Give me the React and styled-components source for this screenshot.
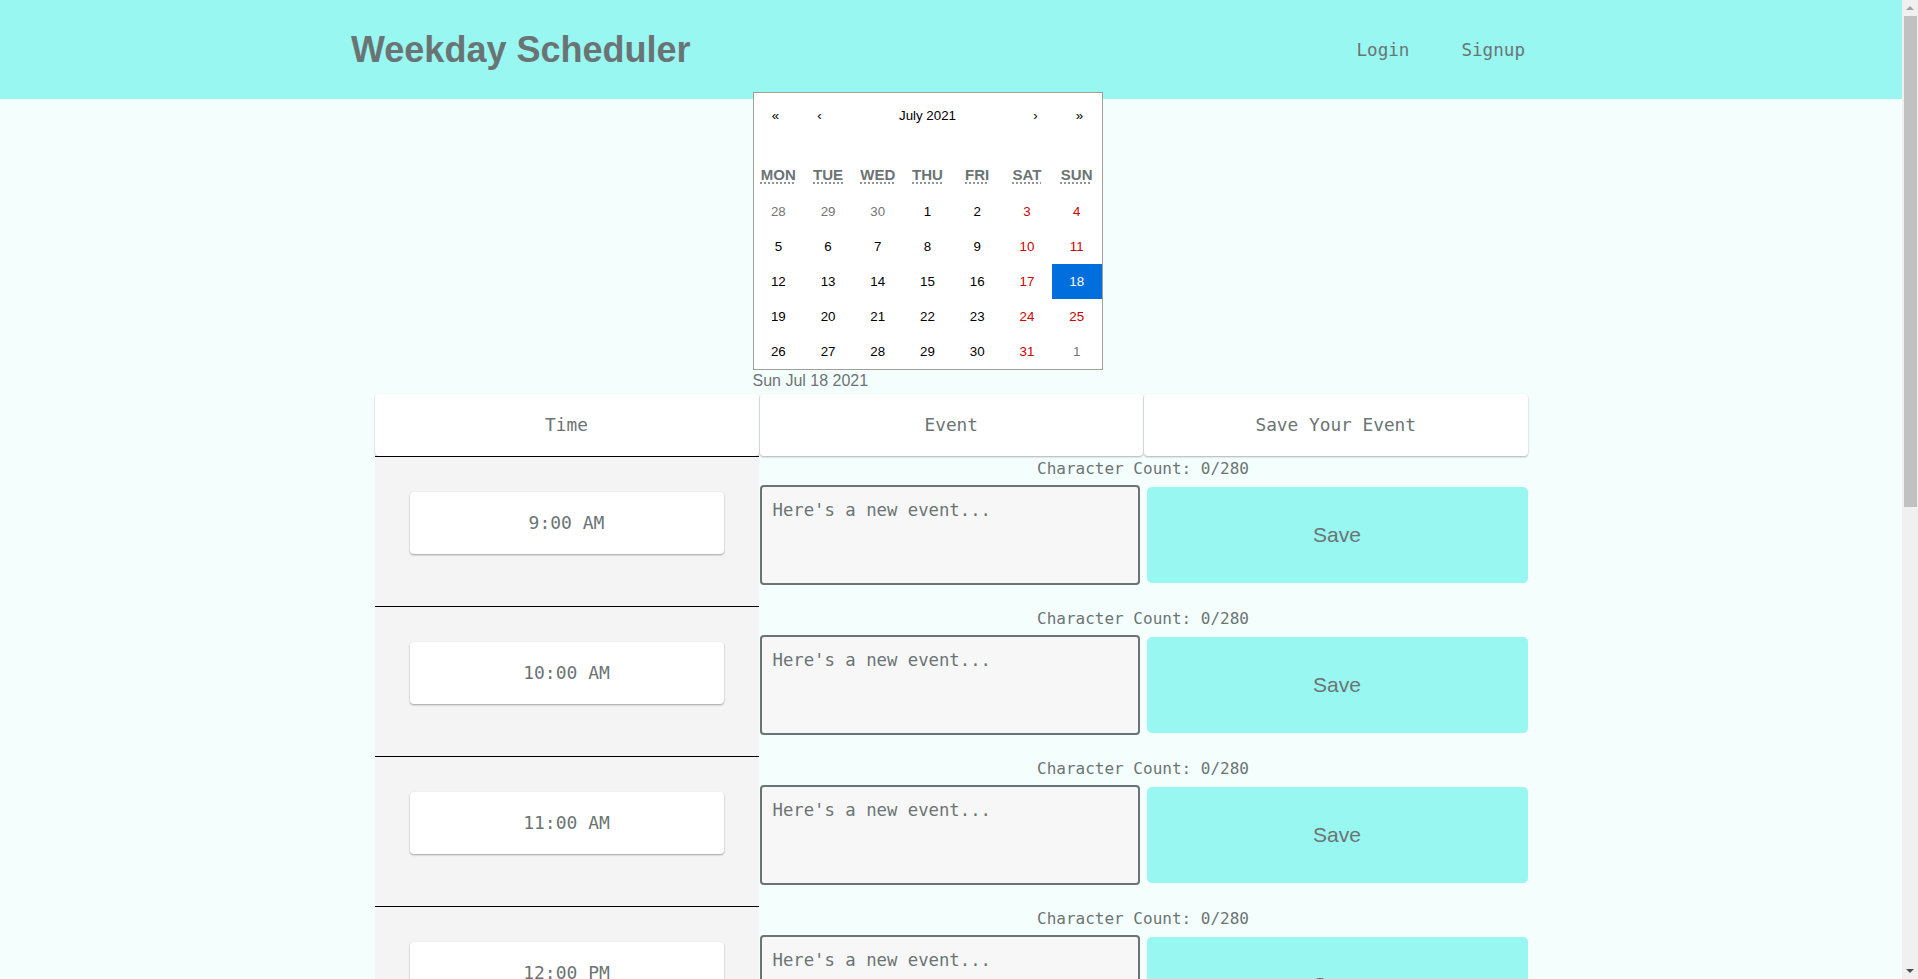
import React from "react";
import styled, { createGlobalStyle } from "styled-components";

const GRAY = "#6b7474";
const CYAN = "#98f7f1";
const MONO = `"DejaVu Sans Mono", "Liberation Mono", monospace`;
const SANS = `"Liberation Sans", Arial, sans-serif`;

const GlobalStyle = createGlobalStyle`
  html, body { margin: 0; padding: 0; }
  html { background: #f4fffd; }
  body {
    margin-right: 16px;
    background: #f4fffd;
    font-family: ${SANS};
    color: ${GRAY};
  }
  * { box-sizing: border-box; }
`;

/* window scrollbar drawn over the right edge, as in the screenshot */
const ScrollTrack = styled.div`
  position: fixed;
  top: 0;
  right: 0;
  width: 16px;
  height: 100vh;
  background: #f0f0f0;
  z-index: 10;
`;

const ScrollThumb = styled.div`
  position: absolute;
  top: 16px;
  left: 2px;
  right: 1px;
  height: 491px;
  background: #c1c1c1;
`;

const ScrollArrow = styled.div`
  position: absolute;
  left: 4px;
  width: 0;
  height: 0;
  border-left: 4px solid transparent;
  border-right: 4px solid transparent;
  ${(p) =>
    p.$down
      ? `bottom: 6px; border-top: 4px solid #505050;`
      : `top: 6px; border-bottom: 4px solid #a3a3a3;`}
`;

const Header = styled.header`
  height: 99px;
  background: ${CYAN};
`;

const HeaderInner = styled.div`
  width: 1200px;
  height: 100%;
  margin: 0 auto;
  display: flex;
  align-items: center;
  justify-content: space-between;
`;

const Title = styled.h1`
  margin: 0;
  font-family: ${SANS};
  font-weight: bold;
  font-size: 36px;
  color: ${GRAY};
`;

const Nav = styled.nav`
  display: flex;
`;

const NavLink = styled.a`
  padding: 0 26px;
  font-family: ${MONO};
  font-size: 17.6px;
  color: ${GRAY};
  text-decoration: none;
  cursor: pointer;
`;

const CalendarBlock = styled.div`
  width: 397px;
  margin: 0 auto;
`;

const Calendar = styled.div`
  position: relative;
  z-index: 2;
  width: 350px;
  margin-top: -7px;
  background: #fff;
  border: 1px solid #a0a096;
  font-family: ${SANS};
`;

const CalNav = styled.div`
  display: flex;
  height: 44px;
  margin-bottom: 16px;
`;

const CalNavButton = styled.button`
  min-width: 44px;
  border: 0;
  background: none;
  padding: 0;
  font-family: ${SANS};
  font-size: 13.33px;
  color: #000;
  flex-grow: ${(p) => (p.$grow ? 1 : 0)};
`;

const Weekdays = styled.div`
  display: grid;
  grid-template-columns: repeat(7, 1fr);
  padding: 13px 0 11px;
`;

const Weekday = styled.div`
  text-align: center;
  font-weight: bold;
  font-size: 15px;
  line-height: 17px;
  text-transform: uppercase;
  color: ${GRAY};

  abbr {
    text-decoration: underline dotted;
    text-underline-offset: 3px;
  }
`;

const Days = styled.div`
  display: grid;
  grid-template-columns: repeat(7, 1fr);
`;

const Tile = styled.button`
  height: 35px;
  border: 0;
  padding: 0;
  font-family: ${SANS};
  font-size: 13.33px;
  background: ${(p) => (p.$active ? "#006edc" : "none")};
  color: ${(p) =>
    p.$active ? "#fff" : p.$neighbor ? "#757575" : p.$weekend ? "#d10000" : "#000"};
`;

const DateText = styled.div`
  margin: 2px 0 4px;
  font-size: 16px;
  color: ${GRAY};
`;

const Table = styled.div`
  width: 1153px;
  margin: 0 auto;
`;

const HeadRow = styled.div`
  display: grid;
  grid-template-columns: 384px 1fr 1fr;
  gap: 1px;
`;

const HeadCell = styled.div`
  height: 62px;
  padding-bottom: 2px;
  display: flex;
  align-items: center;
  justify-content: center;
  background: #fff;
  border-radius: 4px;
  box-shadow: 0 1px 2px rgba(0, 0, 0, 0.3);
  font-family: ${MONO};
  font-size: 17.8px;
  color: ${GRAY};
`;

const Row = styled.div`
  display: grid;
  grid-template-columns: 384px 1fr;
  height: 150px;
`;

const TimeCell = styled.div`
  background: #f4f4f4;
  border-top: 1px solid #000;
  padding: 35px 35px 0;
`;

const TimeCard = styled.div`
  height: 62px;
  padding-bottom: 2px;
  display: flex;
  align-items: center;
  justify-content: center;
  background: #fff;
  border-radius: 4px;
  box-shadow: 0 1px 2px rgba(0, 0, 0, 0.35);
  font-family: ${MONO};
  font-size: 18px;
  color: ${GRAY};
`;

const EventCell = styled.div`
  padding-top: 1px;
  display: flex;
  flex-direction: column;
`;

const CharCount = styled.div`
  height: 28px;
  line-height: 24px;
  text-align: center;
  font-family: ${MONO};
  font-size: 16px;
  color: ${GRAY};
`;

const EventLine = styled.div`
  display: flex;
  align-items: center;
  gap: 7px;
  padding-left: 1px;
`;

const EventInput = styled.textarea`
  width: 380px;
  height: 100px;
  border: 2px solid ${GRAY};
  border-radius: 4px;
  background: #f7f7f7;
  padding: 13px 11px 12px;
  resize: none;
  font-family: ${MONO};
  font-size: 17.3px;
  color: ${GRAY};
  &::placeholder {
    color: ${GRAY};
    opacity: 1;
  }
`;

const SaveButton = styled.button`
  flex: 1;
  height: 96px;
  border: 0;
  border-radius: 5px;
  background: ${CYAN};
  font-family: ${SANS};
  font-size: 21px;
  color: ${GRAY};
`;

const weekdays = [
  ["MON", "Monday"],
  ["TUE", "Tuesday"],
  ["WED", "Wednesday"],
  ["THU", "Thursday"],
  ["FRI", "Friday"],
  ["SAT", "Saturday"],
  ["SUN", "Sunday"],
];

const days = [
  [28, true], [29, true], [30, true], [1], [2], [3], [4],
  [5], [6], [7], [8], [9], [10], [11],
  [12], [13], [14], [15], [16], [17], [18],
  [19], [20], [21], [22], [23], [24], [25],
  [26], [27], [28], [29], [30], [31], [1, true],
];

const hours = [
  "9:00 AM", "10:00 AM", "11:00 AM", "12:00 PM",
  "1:00 PM", "2:00 PM", "3:00 PM", "4:00 PM", "5:00 PM",
];

export default function App() {
  return (
    <>
      <GlobalStyle />
      <ScrollTrack aria-hidden="true">
        <ScrollArrow />
        <ScrollThumb />
        <ScrollArrow $down />
      </ScrollTrack>

      <Header>
        <HeaderInner>
          <Title>Weekday Scheduler</Title>
          <Nav>
            <NavLink>Login</NavLink>
            <NavLink>Signup</NavLink>
          </Nav>
        </HeaderInner>
      </Header>

      <CalendarBlock>
        <Calendar>
          <CalNav>
            <CalNavButton>«</CalNavButton>
            <CalNavButton>‹</CalNavButton>
            <CalNavButton $grow>July 2021</CalNavButton>
            <CalNavButton>›</CalNavButton>
            <CalNavButton>»</CalNavButton>
          </CalNav>
          <Weekdays>
            {weekdays.map(([s, l]) => (
              <Weekday key={s}>
                <abbr title={l}>{s}</abbr>
              </Weekday>
            ))}
          </Weekdays>
          <Days>
            {days.map(([d, n], i) => (
              <Tile
                key={i}
                $neighbor={!!n}
                $weekend={i % 7 >= 5}
                $active={d === 18 && !n}
              >
                {d}
              </Tile>
            ))}
          </Days>
        </Calendar>
        <DateText>Sun Jul 18 2021</DateText>
      </CalendarBlock>

      <Table>
        <HeadRow>
          <HeadCell>Time</HeadCell>
          <HeadCell>Event</HeadCell>
          <HeadCell>Save Your Event</HeadCell>
        </HeadRow>
        {hours.map((h) => (
          <Row key={h}>
            <TimeCell>
              <TimeCard>{h}</TimeCard>
            </TimeCell>
            <EventCell>
              <CharCount>Character Count: 0/280</CharCount>
              <EventLine>
                <EventInput placeholder="Here's a new event..." />
                <SaveButton>Save</SaveButton>
              </EventLine>
            </EventCell>
          </Row>
        ))}
      </Table>
    </>
  );
}
